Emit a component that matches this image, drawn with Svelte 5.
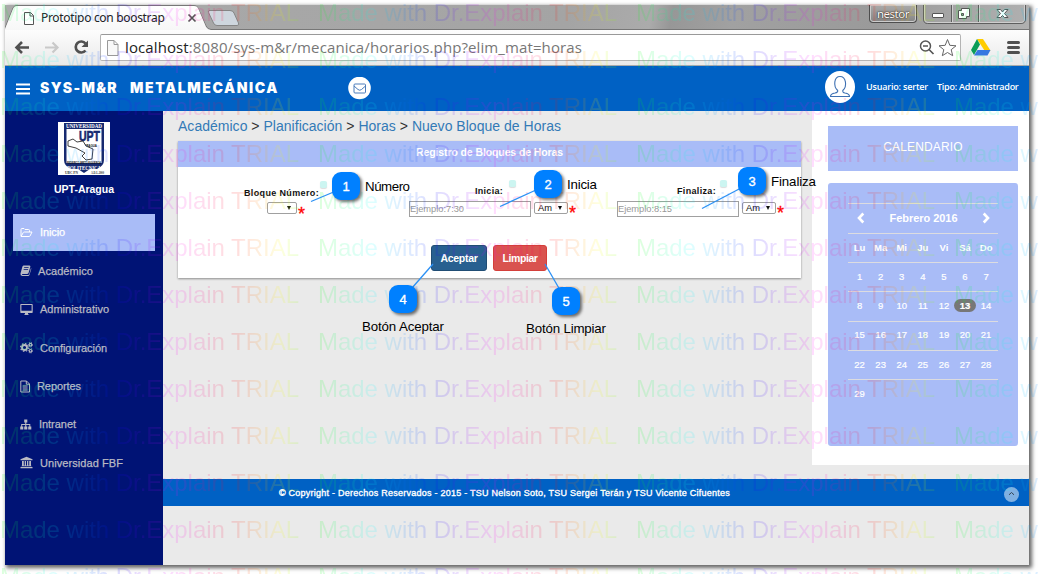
<script>
  // Spreads a text over a given width by adjusting its letter spacing.
  function fit(node, width) {
    const natural = node.getBoundingClientRect().width;
    node.style.letterSpacing = (width - natural) / node.textContent.length + 'px';
  }

  const menu = [
    { label: 'Inicio', icon: 'folder', gap: 7, w: 25, active: true },
    { label: 'Académico', icon: 'book', gap: 5, w: 55 },
    { label: 'Administrativo', icon: 'desktop', gap: 7, w: 69 },
    { label: 'Configuración', icon: 'cogs', gap: 7, w: 67 },
    { label: 'Reportes', icon: 'file', gap: 4, w: 44 },
    { label: 'Intranet', icon: 'sitemap', gap: 6, w: 37 },
    { label: 'Universidad FBF', icon: 'university', gap: 7, w: 83 }
  ];
  const weekdays = ['Lu', 'Ma', 'Mi', 'Ju', 'Vi', 'Sá', 'Do'];
  const weeks = [
    [1, 2, 3, 4, 5, 6, 7],
    [8, 9, 10, 11, 12, 13, 14],
    [15, 16, 17, 18, 19, 20, 21],
    [22, 23, 24, 25, 26, 27, 28],
    [29, '', '', '', '', '', '']
  ];
  const times = [
    { label: 'Inicia:', w: 28, lead: 66, hint: 'Ejemplo:7:30', hw: 54 },
    { label: 'Finaliza:', w: 39, lead: 60, hint: 'Ejemplo:8:15', hw: 54 }
  ];
  const callouts = [
    { n: 1, x: 332, y: 172, label: 'Número', tx: 365, ty: 191, tw: 45, line: [311, 201.5, 336, 191] },
    { n: 2, x: 534, y: 170, label: 'Inicia', tx: 567, ty: 189, tw: 30, line: [500, 206.5, 536, 190] },
    { n: 3, x: 738, y: 167, label: 'Finaliza', tx: 771, ty: 186, tw: 45, line: [702, 208.5, 741, 188] },
    { n: 4, x: 389, y: 285, label: 'Botón Aceptar', tx: 362, ty: 331, tw: 82, line: [433, 264, 412, 288] },
    { n: 5, x: 552, y: 287, label: 'Botón Limpiar', tx: 526, ty: 333, tw: 80, line: [545, 264, 560, 290] }
  ];
  const markRows = Array.from({ length: 13 }, (_, i) => 21 + i * 47);
  const markCols = [0, 318, 636, 954];
</script>

<div class="stage">
  <div class="window">
    <div class="titlebar">
      <svg class="tabs" width="240" height="25" viewBox="0 0 240 25">
        <defs>
          <linearGradient id="tab" x1="0" y1="0" x2="0" y2="1"><stop offset="0" stop-color="#fff" /><stop offset="1" stop-color="#f7f7f7" /></linearGradient>
        </defs>
        <path d="M0 25V23L8 3Q9 .5 12 .5H189Q192 .5 193 3L201 21Q202.500 24.500 206 24.500H240" fill="none" stroke="#777" />
        <path d="M0 25V24L8 4Q9 1 12 1H189Q192 1 193 3L201 22Q203 25 206 25Z" fill="url(#tab)" />
        <path d="M204 5.500H225Q228 5.500 229 8L233.500 18Q234.500 20.500 232 20.500H212Q209.500 20.500 208.500 18L203.500 7.500Q203 5.500 204 5.500Z" fill="#ced6de" stroke="#858585" />
        <path d="M19.500 7.500H25.500L28.500 10.500V19.500H19.500ZM25 7.500V11H28.500" fill="#fff" stroke="#555" />
        <path d="M183.500 9.500L190.500 16.500M190.500 9.500L183.500 16.500" stroke="#555" stroke-width="1.700" />
      </svg>
      <div class="tabtitle"><span use:fit={123.500}>Prototipo con boostrap</span></div>
      <div class="wincontrols">
        <div class="user">nestor</div>
        <svg width="106" height="21" viewBox="0 0 106 21">
          <path d="M.5 0V14Q.5 18.500 4.500 18.500H98Q102.500 18.500 102.500 14V0M28.500 0V18M55.500 0V18" fill="none" stroke="#5f5f5f" />
          <path d="M1.500 0V14Q1.500 17.500 5 17.500H97Q101.500 17.500 101.500 14V0M29.500 0V17M56.500 0V17" fill="none" stroke="#cecece" />
          <rect x="9.500" y="8.500" width="11" height="4" rx=".5" fill="#fff" stroke="#555" />
          <path d="M38.500 3.500H46.500V11.500H43.500V13.500H35.500V5.500H38.500Z" fill="#fff" stroke="#555" />
          <path d="M38.500 8.500H40.500V10.500H38.500Z" fill="#999" stroke="#555" />
          <path d="M74 4.500H77.500L79.500 7L81.500 4.500H85L81.500 8.500L85 12.500H81.500L79.500 10.500L77.500 12.500H74L77.500 8.500Z" fill="#fff" stroke="#555" />
        </svg>
      </div>
    </div>

    <div class="toolbar">
      <svg width="90" height="35" viewBox="0 0 90 35">
        <path d="M24 17.500H12M17 12L11.500 17.500L17 23" fill="none" stroke="#505050" stroke-width="2.600" />
        <path d="M40 17.500H52M47.500 12.500L52.500 17.500L47.500 22.500" fill="none" stroke="#c9c9c9" stroke-width="2.200" />
        <path d="M80.500 13.500A5.500 5.500 0 1 0 80.500 20.500" fill="none" stroke="#505050" stroke-width="2.700" />
        <path d="M83 10.500V17H76.500Z" fill="#505050" />
      </svg>
      <div class="address">
        <svg width="14" height="18" viewBox="0 0 14 18"><path d="M1.500 1.500H8L12 5.500V16.500H1.500ZM8 1.500V5.500H12" fill="#f8f8f8" stroke="#999" /></svg>
        <div class="url"><span use:fit={457}><b>localhost</b>:8080/sys-m&amp;r/mecanica/horarios.php?elim_mat=horas</span></div>
        <svg width="42" height="22" viewBox="0 0 42 22">
          <circle cx="7.500" cy="9" r="5" fill="none" stroke="#555" stroke-width="1.500" />
          <path d="M5 9H10M11 12.500L15.500 17" stroke="#555" stroke-width="1.700" />
          <path d="M29.500 2.500L31.800 8.300L38 8.800L33.200 12.700L34.700 18.700L29.500 15.500L24.300 18.700L25.800 12.700L21 8.800L27.200 8.300Z" fill="#fff" stroke="#666" />
        </svg>
      </div>
      <svg width="68" height="35" viewBox="0 0 68 35">
        <path d="M16 9H22L29.500 20.500H23.500Z" fill="#fc0" />
        <path d="M16 9L19 14.500L13 25L10 20Z" fill="#0a9d58" />
        <path d="M16.500 20H29.500L26.500 25.500H13Z" fill="#3677e0" />
        <path d="M47.500 12.500H57.500M47.500 17.500H57.500M47.500 22.500H57.500" stroke="#505050" stroke-width="3" stroke-linecap="round" />
      </svg>
    </div>

    <header>
      <svg class="burger" width="14" height="14" viewBox="0 0 14 14"><path d="M0 2.500H14M0 7H14M0 11.500H14" stroke="#fff" stroke-width="2" /></svg>
      <div class="brand"><span class="sys" use:fit={78}>SYS-M&amp;R</span><span use:fit={149}>METALMECÁNICA</span></div>
      <svg class="mail" width="23" height="23" viewBox="0 0 23 23">
        <circle cx="11.500" cy="11" r="11.300" fill="#fff" />
        <rect x="6" y="7" width="11.500" height="9" rx="1" fill="none" stroke="#4c7dbb" />
        <path d="M6 9L10 12.500Q11.700 14 13.500 12.500L17.500 9" fill="none" stroke="#4c7dbb" />
      </svg>
      <svg class="avatar" width="30" height="32" viewBox="0 0 30 32">
        <ellipse cx="15" cy="16" rx="15" ry="16" fill="#fff" />
        <path d="M12.700 19.500C8 15 9 5.500 15 5.500S22.500 15 17.800 19.500Q17.300 21.300 20 22Q24.500 22.800 24.500 25.500H5.500Q5.500 22.800 10 22Q13.200 21.300 12.700 19.500Z" fill="none" stroke="#3e70b2" stroke-width="1.100" />
      </svg>
      <div class="who"><span use:fit={62}>Usuario: serter</span><span use:fit={81.500}>Tipo: Administrador</span></div>
    </header>

    <div class="body">
      <aside>
        <svg class="crest" width="52" height="53" viewBox="0 0 52 53">
          <rect width="52" height="53" fill="#fff" />
          <path d="M6 1H46V38Q46 44 39 47H32L26 51L20 47H13Q6 44 6 38Z" fill="#172a70" />
          <path d="M8.500 7H43.500V41H8.500Z" fill="#fff" />
          <text x="8" y="5.500" font-size="5.500" textLength="36" lengthAdjust="spacingAndGlyphs" fill="#fff" class="serif">UNIVERSIDAD</text>
          <text x="21" y="19" font-size="14.500" textLength="21" lengthAdjust="spacingAndGlyphs" fill="#172a70" stroke="#172a70" stroke-width=".6">UPT</text>
          <text x="26" y="25" font-size="4" textLength="13" lengthAdjust="spacingAndGlyphs" fill="#111">ARAGUA</text>
          <path d="M10 19L15 17L19 20L25 19L28 24L35 27L34 37L28 38L24 34L27 31L18 26L10 24Z" fill="#fff" stroke="#111" stroke-width=".8" />
          <text x="9" y="41.500" font-size="3.800" textLength="34" lengthAdjust="spacingAndGlyphs" fill="#111">FEDERICO BRITO FIGUEROA</text>
          <text x="9" y="47.500" font-size="6" textLength="34" lengthAdjust="spacingAndGlyphs" fill="#fff" class="serif">POLITECNICA</text>
          <text x="7" y="52" font-size="3.800" textLength="13" lengthAdjust="spacingAndGlyphs" fill="#333" class="serif">UBC PN</text>
          <text x="33" y="52" font-size="3.800" textLength="13" lengthAdjust="spacingAndGlyphs" fill="#333" class="serif">A.D.L.2000</text>
        </svg>
        <div class="school"><span use:fit={60}>UPT-Aragua</span></div>
        <nav>
          {#each menu as item}
            <div class="item" class:active={item.active}>
              <svg width="13" height="13" viewBox="0 0 13 13" fill="currentColor" style:margin-right="{item.gap}px">
                {#if item.icon === 'folder'}
                  <path d="M1 10V3.500Q1 2.500 2 2.500H4L5 3.500H8.500Q9.500 3.500 9.500 4.500V6M1 10.500L3.300 6.500Q3.600 6 4.200 6H12L10 10Q9.700 10.500 9 10.500Z" fill="none" stroke="currentColor" />
                {:else if item.icon === 'book'}
                  <path fill-rule="evenodd" d="M3.500 1.500H9.500Q10.800 1.500 10.300 3L8.500 9Q8.200 10 7 10H2.300Q1.500 10.600 2.500 11H8Q9 11 9.300 10L11 4Q11.500 4.500 11.200 5.300L9.500 10.800Q9.200 12 8 12H2.300Q0 11.500 .5 9.500L2.300 3Q2.600 1.500 3.500 1.500ZM4.300 3.300L4 4H8.500L8.700 3.300ZM3.800 5.200L3.500 6H8L8.200 5.200Z" />
                {:else if item.icon === 'desktop'}
                  <path fill-rule="evenodd" d="M1 1H12Q12.700 1 12.700 1.700V9.300Q12.700 10 12 10H8V11L9 12H4L5 11V10H1Q.3 10 .3 9.300V1.700Q.3 1 1 1ZM1.400 2V7.700H11.600V2Z" />
                {:else if item.icon === 'cogs'}
                  <circle cx="4.500" cy="6.500" r="2.500" fill="none" stroke="currentColor" stroke-width="1.800" />
                  <circle cx="4.500" cy="6.500" r="3.900" fill="none" stroke="currentColor" stroke-width="1.200" stroke-dasharray="1.500 1.560" />
                  <circle cx="10.500" cy="3.700" r="1.300" fill="none" stroke="currentColor" stroke-width="1.100" />
                  <circle cx="10.500" cy="3.700" r="2.200" fill="none" stroke="currentColor" stroke-width=".8" stroke-dasharray="1 .97" />
                  <circle cx="10.500" cy="9.800" r="1.300" fill="none" stroke="currentColor" stroke-width="1.100" />
                  <circle cx="10.500" cy="9.800" r="2.200" fill="none" stroke="currentColor" stroke-width=".8" stroke-dasharray="1 .97" />
                {:else if item.icon === 'file'}
                  <path d="M.8 1H6.500L9.500 4V12H.8ZM6.300 1V4.200H9.500M2.700 6H7.600M2.700 8H7.600M2.700 10H7.600" fill="none" stroke="currentColor" />
                {:else if item.icon === 'sitemap'}
                  <path d="M4.200 1.500H7.300V4.500H6.300V6H10.300V8.500H11.300V11.500H8.200V8.500H9.300V7H6.300V8.500H7.300V11.500H4.200V8.500H5.200V7H2.200V8.500H3.300V11.500H.2V8.500H1.200V6H5.200V4.500H4.200Z" />
                {:else}
                  <path d="M6.500 .7L12.500 3.200V4.200H.5V3.200ZM2 5H3.800V9.500H4.700V5H6V9.500H7V5H8.300V9.500H9.200V5H11V9.500L11.800 10.300H1.200L2 9.500ZM.5 11H12.500V12.200H.5Z" />
                {/if}
              </svg>
              <span use:fit={item.w}>{item.label}</span>
            </div>
          {/each}
        </nav>
      </aside>

      <main>
        <div class="columns">
          <section class="content">
            <div class="crumbs"><span use:fit={383}><a>Académico</a> &gt; <a>Planificación</a> &gt; <a>Horas</a> &gt; <a>Nuevo Bloque de Horas</a></span></div>
            <div class="panel">
              <div class="paneltitle"><span use:fit={147}>Registro de Bloques de Horas</span></div>
              <div class="fields">
                <div class="group number">
                  <div class="label low"><span use:fit={75}>Bloque Número:</span><i></i></div>
                  <div class="row pick"><div class="select short"><em></em></div><span class="star">*</span></div>
                </div>
                {#each times as t}
                  <div class="group time">
                    <div class="label" style:padding-left="{t.lead}px"><span use:fit={t.w}>{t.label}</span><i class:near={t.w > 30}></i></div>
                    <div class="row">
                      <div class="input"><span use:fit={t.hw}>{t.hint}</span></div>
                      <div class="select"><span>Am</span><em></em></div><span class="star">*</span>
                    </div>
                  </div>
                {/each}
              </div>
              <div class="buttons">
                <div class="btn ok"><span use:fit={37}>Aceptar</span></div>
                <div class="btn clear"><span use:fit={35}>Limpiar</span></div>
              </div>
            </div>
          </section>

          <section class="side">
            <div class="caltitle"><span use:fit={79.500}>CALENDARIO</span></div>
            <div class="calendar">
              <div class="month">
                <svg width="8" height="12" viewBox="0 0 8 12"><path d="M6.300 1.500L2 6L6.300 10.500" fill="none" stroke="#fff" stroke-width="2.600" /></svg>
                <span use:fit={68}>Febrero 2016</span>
                <svg width="8" height="12" viewBox="0 0 8 12"><path d="M1.700 1.500L6 6L1.700 10.500" fill="none" stroke="#fff" stroke-width="2.600" /></svg>
              </div>
              <div class="week head">{#each weekdays as d}<span>{d}</span>{/each}</div>
              {#each weeks as week}
                <div class="week">{#each week as d}<span class:today={d === 13}>{d}</span>{/each}</div>
              {/each}
            </div>
          </section>
        </div>
        <footer>
          <span use:fit={451}>© Copyright - Derechos Reservados - 2015 - TSU Nelson Soto, TSU Sergei Terán y TSU Vicente Cifuentes</span>
          <svg width="15" height="15" viewBox="0 0 15 15"><circle cx="7.500" cy="7.500" r="7.500" fill="#80b0e1" /><path d="M5 7.800L7.500 5.500L10 7.800" fill="none" stroke="#345" /></svg>
        </footer>
      </main>
    </div>
  </div>

  <svg class="overlay" width="1038" height="574" viewBox="0 0 1038 574">
    <defs>
      <linearGradient id="rainbow" gradientUnits="userSpaceOnUse" x1="0" y1="0" x2="318" y2="0" spreadMethod="repeat">
        <stop offset="0" stop-color="#0f0" /><stop offset=".17" stop-color="#0ff" /><stop offset=".36" stop-color="#00f" />
        <stop offset=".55" stop-color="#f0f" /><stop offset=".74" stop-color="#f00" /><stop offset=".88" stop-color="#ff0" /><stop offset="1" stop-color="#0f0" />
      </linearGradient>
    </defs>
    <g fill="url(#rainbow)" opacity=".13" font-size="24">
      {#each markRows as y}
        {#each markCols as x}
          <text {x} {y} textLength="299">Made with Dr.Explain TRIAL</text>
        {/each}
      {/each}
    </g>
    {#each callouts as c}
      <line x1={c.line[0]} y1={c.line[1]} x2={c.line[2]} y2={c.line[3]} stroke="#2c91f5" stroke-width="1.300" />
      <rect class="bubble" x={c.x} y={c.y} width="28" height="28" rx="9" fill="#0080ff" />
      <text x={c.x + 14} y={c.y + 19} font-size="13" text-anchor="middle" fill="#fff" stroke="#fff" stroke-width=".35">{c.n}</text>
      <text x={c.tx} y={c.ty} font-size="13.300" textLength={c.tw} fill="#000">{c.label}</text>
    {/each}
  </svg>
</div>

<style>
  :global(body) { margin: 0; background: #fff; }
  .stage { position: relative; width: 1038px; height: 574px; overflow: hidden; padding: 5px; box-sizing: border-box; font-family: "Liberation Sans", sans-serif; }
  .stage * { box-sizing: border-box; }
  svg { display: block; flex: none; }
  span { display: inline-block; white-space: nowrap; }
  .window { width: 1024px; height: 560px; display: flex; flex-direction: column; box-shadow: 2px 2px 4px 1px rgba(0, 0, 0, .6); background: #eaeaea; }
  .titlebar { height: 25px; display: flex; position: relative; background: linear-gradient(100deg, #aaa 0, #a4a4a4 55%, #ababab 63%, #979797 65%, #a1a1a1 71%, #9a9a9a 85%, #b0b0b0 100%); border-bottom: 1px solid #777; }
  .tabs { height: 25px; }
  .tabtitle { position: absolute; left: 36px; top: 5px; font: 12px/16px "Noto Sans", sans-serif; color: #222; }
  .wincontrols { margin-left: auto; display: flex; gap: 6px; }
  .user { width: 48px; height: 18px; border: 1px solid #4e4e4e; border-top: 0; border-radius: 0 0 4px 4px; box-shadow: inset 0 0 0 1px #ccc; background: linear-gradient(#aaa, #858585); color: #fff; text-shadow: 0 0 2px #222, 0 0 1px #222; font: 11.500px/17px "Noto Sans", sans-serif; letter-spacing: -.5px; text-align: center; }
  .toolbar { height: 36px; display: flex; background: linear-gradient(#fdfdfd, #e9e9e9); border-bottom: 1px solid #aaa; }
  .address { flex: 1; margin: 4px 0 4px 5px; height: 27px; border: 1px solid #b4b4b4; border-top-color: #999; border-radius: 2px; background: #fff; display: flex; align-items: center; padding: 0 0 0 5px; }
  .url { flex: 1; padding-left: 5px; margin-top: -2px; font: 15px/24px "Open Sans", sans-serif; color: #777; }
  .url b { font-weight: 400; color: #222; }
  header { height: 45px; background: #0061c4; display: flex; align-items: center; color: #fff; }
  .burger { margin-left: 11px; }
  .brand { margin-left: 10px; margin-top: -1px; width: 308px; font: 900 14px/20px Inter, sans-serif; }
  .sys { margin-right: 12px; }
  .avatar { margin-left: 454px; margin-top: -3px; }
  .who { margin-left: 11px; display: flex; gap: 9px; font: 600 9px/12px "Open Sans", sans-serif; margin-top: -3px; }
  .body { flex: 1; display: flex; min-height: 0; }
  aside { width: 158px; background: #001375; color: #fff; display: flex; flex-direction: column; }
  .crest { margin: 11px 0 0 53px; }
  .crest text { font-weight: bold; }
  .serif { font-family: "Liberation Serif", serif; }
  .school { text-align: center; font: bold 10.500px/14px "Liberation Sans", sans-serif; margin-top: 7px; }
  nav { margin: 18px 8px 0; }
  .item { height: 37px; margin-bottom: 1.400px; padding-left: 7px; display: flex; align-items: center; font-size: 11px; color: #b9bac3; -webkit-text-stroke: .25px currentColor; }
  .item.active { background: #a9bcf7; color: #fff; padding-bottom: 1px; }
  main { flex: 1; display: flex; flex-direction: column; }
  .columns { display: flex; height: 354px; }
  .content { width: 649px; padding: 5px 11px 0 15px; }
  .crumbs { height: 25px; font-size: 14px; line-height: 20px; color: #333; }
  .crumbs a { color: #337ab7; }
  .panel { height: 137px; background: #fff; box-shadow: 0 1px 2px rgba(0, 0, 0, .4); }
  .paneltitle { height: 26px; background: #a9bcf7; color: #fff; text-align: center; font: bold 10.500px/23px "Liberation Sans", sans-serif; }
  .fields { display: flex; padding-left: 66px; height: 78px; }
  .group { display: flex; flex-direction: column; flex: none; }
  .number { width: 165px; }
  .time { width: 208px; }
  .time + .time { width: 168px; }
  .label { height: 34px; display: flex; font: bold 9px/12px "Liberation Sans", sans-serif; padding-top: 18px; color: #111; }
  .low { padding-top: 20px; }
  .label i { width: 7px; height: 7px; margin: -5px 0 0 6px; background: #ccf5f1; border-radius: 2px; box-shadow: 0 1px 1px #ddd; }
  .low i { margin: -6px 0 0 1px; }
  .label i.near { margin-left: 4px; }
  .row { display: flex; align-items: flex-start; }
  .pick { padding-left: 23px; }
  .input { width: 122px; height: 16px; border: 1px solid #a0a0a0; margin-right: 3px; font-size: 9.300px; line-height: 14px; color: #999; background: #fff; }
  .select { width: 34px; height: 12px; margin-top: 1px; border: 1px solid #a0a0a0; border-radius: 2px; display: flex; align-items: center; justify-content: space-between; padding: 0 5px 0 3px; font-size: 9.300px; line-height: 10px; color: #111; }
  .short { width: 30px; justify-content: flex-end; }
  .select em { border: 2px solid transparent; border-top: 4px solid #111; border-bottom: 0; }
  .star { color: #f00; font: 18px/20px "Liberation Sans", sans-serif; margin: 2px 0 0 1px; -webkit-text-stroke: .3px #f00; }
  .number .star { margin-top: 3px; }
  .buttons { display: flex; gap: 6px; padding-left: 253px; }
  .btn { height: 26px; border-radius: 3px; text-align: center; color: #fff; font: bold 10.500px/24px "Liberation Sans", sans-serif; }
  .ok { width: 56px; background: #286090; border: 1px solid #204d74; }
  .clear { width: 54px; background: #d9534f; border: 1px solid #d43f3a; }
  .side { width: 217px; background: #fff; padding: 15px 11px 0 16px; }
  .caltitle { height: 45px; background: #a9bcf7; color: #fff; font-size: 12px; line-height: 43px; text-align: center; }
  .calendar { margin-top: 12px; height: 263px; border-radius: 3px; background: #a9bcf7; padding: 20px 20px 0; color: #fff; }
  .month { height: 30px; border-top: 1px solid #dcdce0; display: flex; align-items: center; justify-content: space-between; padding: 0 8px 2px 9px; font: bold 11px/14px "Liberation Sans", sans-serif; }
  .week { height: 29.200px; border-top: 1px solid #dcdce0; display: grid; grid-template-columns: repeat(7, 21.100px); padding: 0 0 1.500px 1px; align-items: center; font: 9.500px/13px "Liberation Sans", sans-serif; text-align: center; -webkit-text-stroke: .2px #fff; }
  .week.head { font-weight: bold; -webkit-text-stroke: 0; }
  .today { background: #777; border-radius: 7px; font-weight: bold; }
  footer { margin-top: 14px; height: 27px; background: #0061c4; color: #fff; display: flex; align-items: center; justify-content: space-between; padding: 0 10px 0 116px; font: 9px/12px "Liberation Sans", sans-serif; -webkit-text-stroke: .35px #fff; }
  footer svg { margin-top: 4px; }
  .overlay { position: absolute; left: 0; top: 0; pointer-events: none; }
  .bubble { filter: drop-shadow(2px 2px 1.500px rgba(0, 0, 0, .55)); }
</style>
